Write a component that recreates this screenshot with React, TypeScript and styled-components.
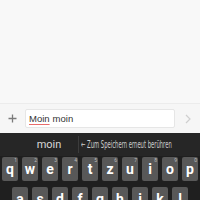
import styled, { createGlobalStyle } from 'styled-components';

const GlobalStyle = createGlobalStyle`
  html, body {
    margin: 0;
    padding: 0;
    background: #f8f8f8;
  }
  * {
    box-sizing: border-box;
  }
`;

const Screen = styled.div`
  width: 200px;
  height: 200px;
  display: flex;
  flex-direction: column;
  overflow: hidden;
  font-family: Roboto, 'Liberation Sans', sans-serif;
`;

const Conversation = styled.div`
  flex: 0 0 104px;
  background: #f8f8f8;
  border-bottom: 1px solid #ececec;
`;

const Composer = styled.div`
  flex: 0 0 29px;
  display: flex;
  align-items: center;
  background: #f6f6f6;
`;

const IconCell = styled.div`
  flex: 0 0 25px;
  height: 100%;
  display: flex;
  align-items: center;
  justify-content: center;
`;

const Input = styled.div`
  flex: 0 0 150px;
  height: 19px;
  background: #fff;
  border: 1px solid #e6e6e6;
  border-radius: 2px;
  display: flex;
  align-items: center;
  padding-left: 3px;
  font-family: 'Liberation Sans', Arial, sans-serif;
  font-size: 9.5px;
  color: #333;
`;

const Misspelled = styled.span`
  text-decoration: underline;
  text-decoration-color: #e86c6c;
  text-decoration-thickness: 1px;
  text-underline-offset: 2px;
  margin-right: 3px;
`;

const Keyboard = styled.div`
  flex: 1;
  background: #1f1f1f;
  display: flex;
  flex-direction: column;
`;

const SuggestionBar = styled.div`
  flex: 0 0 23px;
  display: flex;
  align-items: center;
  background: #262626;
  overflow: hidden;
`;

const Suggestion = styled.div`
  flex: 0 0 78px;
  padding-left: 20px;
  text-align: center;
  font-size: 11px;
  color: #d8d8d8;
`;

const Divider = styled.div`
  flex: 0 0 1px;
  height: 17px;
  background: #3c3c3c;
`;

const Hint = styled.div`
  flex: 0 0 auto;
  margin-left: 2px;
  font-family: 'DejaVu Sans Condensed', 'Liberation Sans Narrow', 'Liberation Sans', sans-serif;
  font-size: 10px;
  color: #cfcfcf;
  white-space: nowrap;
  transform: scaleX(0.585);
  transform-origin: left center;
`;

const Rows = styled.div`
  display: flex;
  flex-direction: column;
  gap: 6px;
  padding: 1px 2px 0;
`;

const Row = styled.div<{ $indent?: number }>`
  display: flex;
  gap: 4px;
  padding-left: ${(p) => p.$indent ?? 0}px;
`;

const Key = styled.div`
  position: relative;
  flex: 0 0 16px;
  height: 24px;
  background: #585858;
  border-radius: 2px;
  display: flex;
  align-items: center;
  justify-content: center;
  color: #fff;
  font-size: 14px;
  font-weight: 700;
  padding-bottom: 1px;
`;

const KeyNumber = styled.span`
  position: absolute;
  top: 0;
  right: 1px;
  font-size: 5px;
  font-weight: 400;
  color: #bdbdbd;
  line-height: 6px;
`;

const topRow = ['q', 'w', 'e', 'r', 't', 'z', 'u', 'i', 'o', 'p'];
const homeRow = ['a', 's', 'd', 'f', 'g', 'h', 'j', 'k', 'l'];

export default function App() {
  return (
    <>
      <GlobalStyle />
      <Screen>
        <Conversation />
        <Composer>
          <IconCell>
            <svg width="9" height="9" viewBox="0 0 9 9">
              <path d="M4.5 0.5v8M0.5 4.5h8" stroke="#7a7a7a" strokeWidth="1.3" />
            </svg>
          </IconCell>
          <Input>
            <Misspelled>Moin</Misspelled>moin
          </Input>
          <IconCell>
            <svg width="6" height="10" viewBox="0 0 6 10">
              <path d="M1 1l4 4-4 4" stroke="#cfcfcf" strokeWidth="1.2" fill="none" />
            </svg>
          </IconCell>
        </Composer>
        <Keyboard>
          <SuggestionBar>
            <Suggestion>moin</Suggestion>
            <Divider />
            <Hint>← Zum Speichern erneut berühren</Hint>
          </SuggestionBar>
          <Rows>
            <Row>
              {topRow.map((k, i) => (
                <Key key={k}>
                  {k}
                  <KeyNumber>{(i + 1) % 10}</KeyNumber>
                </Key>
              ))}
            </Row>
            <Row $indent={10}>
              {homeRow.map((k) => (
                <Key key={k}>{k}</Key>
              ))}
            </Row>
          </Rows>
        </Keyboard>
      </Screen>
    </>
  );
}
